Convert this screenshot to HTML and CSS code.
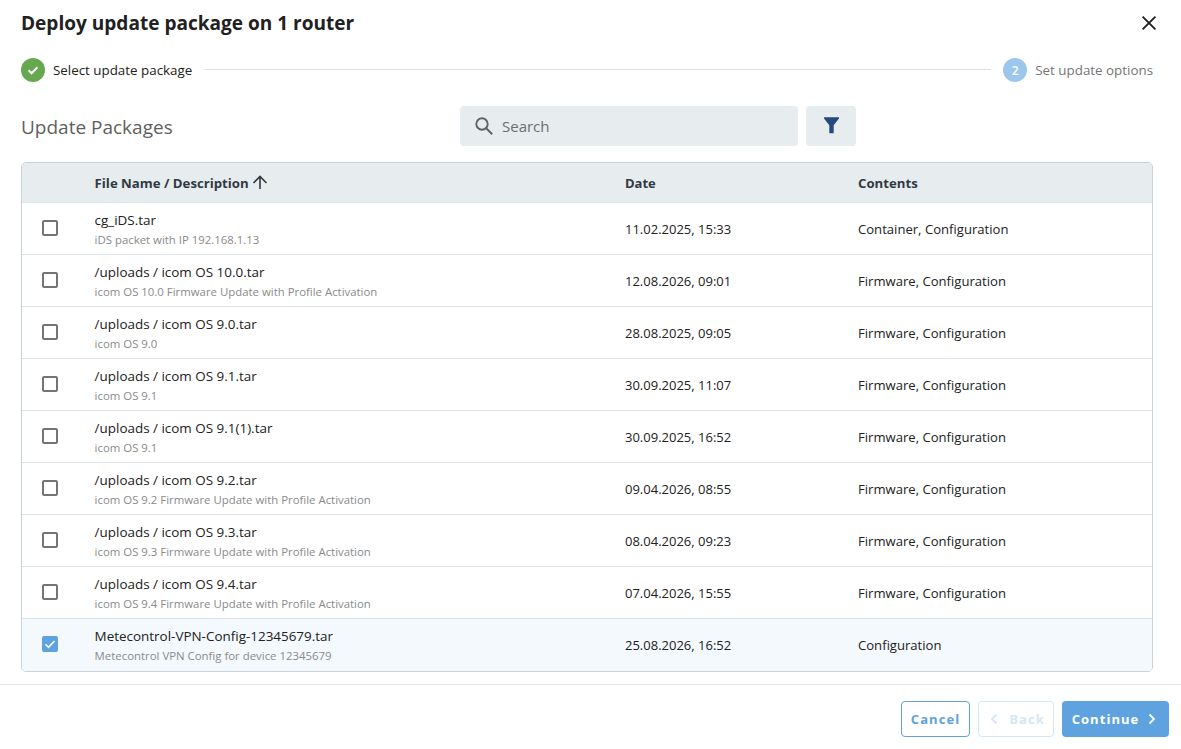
FILE: index.html
```html
<!DOCTYPE html>
<html>
<head>
  <title>Deploy update package</title>
  <meta charset="UTF-8">
  <link rel="stylesheet" href="styles.css">
</head>
<body>
  <div class="dialog">
    <div class="dialog-head">
      <h1>Deploy update package on 1 router</h1>
      <svg class="close" width="24" height="24" viewBox="0 0 24 24"><path d="M5.600 5.600l12.800 12.800M18.400 5.600L5.600 18.400" fill="none" stroke="#212121" stroke-width="1.900"/></svg>
    </div>

    <div class="stepper">
      <span class="step-dot done">
        <svg width="14" height="14" viewBox="0 0 14 14"><path d="M2.600 7.300l3 3 5.800-6" fill="none" stroke="#fff" stroke-width="2"/></svg>
      </span>
      <span class="step-label">Select update package</span>
      <span class="step-line"></span>
      <span class="step-dot todo">2</span>
      <span class="step-label muted">Set update options</span>
    </div>

    <div class="toolbar">
      <h2>Update Packages</h2>
      <div class="search">
        <svg width="24" height="24" viewBox="0 0 24 24"><circle cx="10" cy="10" r="5.700" fill="none" stroke="#5f6368" stroke-width="1.900"/><path d="M14.200 14.200l6 6" stroke="#5f6368" stroke-width="2"/></svg>
        <span>Search</span>
      </div>
      <div class="filter-btn">
        <svg width="24" height="24" viewBox="0 0 24 24"><path d="M5 3.200h15v1.400l-5.300 6.600v8h-4.400v-8L5 4.600z" fill="#264a80"/></svg>
      </div>
    </div>

    <div class="table">
      <div class="row head">
        <div></div>
        <div class="sort">File Name / Description
          <svg width="18" height="18" viewBox="0 0 18 18"><path d="M9 15V2.500M2.500 9L9 2.500 15.500 9" fill="none" stroke="#303a42" stroke-width="1.600"/></svg>
        </div>
        <div class="date">Date</div>
        <div>Contents</div>
      </div>

      <div class="row">
        <div class="check"><span class="box"></span></div>
        <div><div class="name">cg_iDS.tar</div><div class="desc">iDS packet with IP 192.168.1.13</div></div>
        <div class="date">11.02.2025, 15:33</div>
        <div>Container, Configuration</div>
      </div>
      <div class="row">
        <div class="check"><span class="box"></span></div>
        <div><div class="name">/uploads / icom OS 10.0.tar</div><div class="desc">icom OS 10.0 Firmware Update with Profile Activation</div></div>
        <div class="date">12.08.2026, 09:01</div>
        <div>Firmware, Configuration</div>
      </div>
      <div class="row">
        <div class="check"><span class="box"></span></div>
        <div><div class="name">/uploads / icom OS 9.0.tar</div><div class="desc">icom OS 9.0</div></div>
        <div class="date">28.08.2025, 09:05</div>
        <div>Firmware, Configuration</div>
      </div>
      <div class="row">
        <div class="check"><span class="box"></span></div>
        <div><div class="name">/uploads / icom OS 9.1.tar</div><div class="desc">icom OS 9.1</div></div>
        <div class="date">30.09.2025, 11:07</div>
        <div>Firmware, Configuration</div>
      </div>
      <div class="row">
        <div class="check"><span class="box"></span></div>
        <div><div class="name">/uploads / icom OS 9.1(1).tar</div><div class="desc">icom OS 9.1</div></div>
        <div class="date">30.09.2025, 16:52</div>
        <div>Firmware, Configuration</div>
      </div>
      <div class="row">
        <div class="check"><span class="box"></span></div>
        <div><div class="name">/uploads / icom OS 9.2.tar</div><div class="desc">icom OS 9.2 Firmware Update with Profile Activation</div></div>
        <div class="date">09.04.2026, 08:55</div>
        <div>Firmware, Configuration</div>
      </div>
      <div class="row">
        <div class="check"><span class="box"></span></div>
        <div><div class="name">/uploads / icom OS 9.3.tar</div><div class="desc">icom OS 9.3 Firmware Update with Profile Activation</div></div>
        <div class="date">08.04.2026, 09:23</div>
        <div>Firmware, Configuration</div>
      </div>
      <div class="row">
        <div class="check"><span class="box"></span></div>
        <div><div class="name">/uploads / icom OS 9.4.tar</div><div class="desc">icom OS 9.4 Firmware Update with Profile Activation</div></div>
        <div class="date">07.04.2026, 15:55</div>
        <div>Firmware, Configuration</div>
      </div>
      <div class="row selected">
        <div class="check">
          <span class="box on">
            <svg width="16" height="16" viewBox="0 0 16 16"><path d="M3.500 8.300l3 3 6-6.300" fill="none" stroke="#fff" stroke-width="1.600"/></svg>
          </span>
        </div>
        <div><div class="name">Metecontrol-VPN-Config-12345679.tar</div><div class="desc">Metecontrol VPN Config for device 12345679</div></div>
        <div class="date">25.08.2026, 16:52</div>
        <div>Configuration</div>
      </div>
    </div>

    <div class="dialog-foot">
      <div class="btn outline">Cancel</div>
      <div class="btn disabled">
        <svg width="14" height="14" viewBox="0 0 14 14"><path d="M9.500 2.500L5 7l4.500 4.500" fill="none" stroke="#d6e6f6" stroke-width="1.800"/></svg>
        Back
      </div>
      <div class="btn primary">
        Continue
        <svg width="14" height="14" viewBox="0 0 14 14"><path d="M4.500 2.500L9 7l-4.500 4.500" fill="none" stroke="#fff" stroke-width="1.800"/></svg>
      </div>
    </div>
  </div>
</body>
</html>
```

FILE: styles.css
```css
body {
  margin: 0;
  font-family: "Open Sans", sans-serif;
  font-size: 13.1px;
  color: #212121;
  background: #fff;
}
.dialog {
  width: 1181px;
  height: 749px;
  overflow: hidden;
}
.dialog-head {
  display: flex;
  justify-content: space-between;
  align-items: center;
  height: 24px;
  padding: 11px 20px 0 21px;
}
h1 {
  margin: 0;
  font-size: 19.06px;
  font-weight: 700;
  line-height: 24px;
}
.stepper {
  display: flex;
  align-items: center;
  height: 24px;
  margin-top: 23px;
  padding: 0 28px 0 21px;
}
.step-dot {
  display: flex;
  align-items: center;
  justify-content: center;
  width: 24px;
  height: 24px;
  border-radius: 50%;
  font-size: 12px;
  font-weight: 600;
  color: #fff;
}
.step-dot.done {
  background: #66a84f;
}
.step-dot.todo {
  background: #9cc7ec;
}
.step-label {
  margin-left: 8px;
  font-size: 13.36px;
}
.step-label.muted {
  color: #757575;
}
.step-line {
  flex: 1;
  height: 1px;
  margin: 0 12px 1px 13px;
  background: #e0e0e0;
}
.toolbar {
  display: flex;
  align-items: center;
  height: 40px;
  margin-top: 24px;
  padding-left: 21px;
}
h2 {
  width: 439px;
  margin: 2px 0 0;
  font-size: 19px;
  font-weight: 400;
  color: #5f5f5f;
}
.search {
  display: flex;
  align-items: center;
  gap: 6px;
  width: 326px;
  height: 40px;
  padding-left: 12px;
  border-radius: 4px;
  background: #e7ecef;
  font-size: 15px;
  color: #6b6f72;
}
.filter-btn {
  display: flex;
  align-items: center;
  justify-content: center;
  width: 50px;
  height: 40px;
  margin-left: 8px;
  border-radius: 4px;
  background: #e7ecef;
}
.table {
  width: 1130px;
  margin: 16px 0 0 21px;
  border: 1px solid #c8d2da;
  border-radius: 5px;
  overflow: hidden;
}
.row {
  display: grid;
  grid-template-columns: 72.600px 530.400px 233px 1fr;
  align-items: center;
  height: 51px;
  border-top: 1px solid #dde3e8;
}
.row.head {
  height: 39px;
  border-top: 0;
  border-bottom: 1px solid #c8d2da;
  margin-bottom: -1px;
  background: #e7ecef;
  font-size: 13.2px;
  font-weight: 700;
  color: #303a42;
}
.row.selected {
  background: #f4f9fe;
  height: 52px;
}
.sort {
  display: flex;
  align-items: center;
  gap: 2px;
}
.date {
  font-size: 13px;
}
.check {
  padding-left: 20px;
}
.box {
  display: block;
  box-sizing: border-box;
  width: 16px;
  height: 16px;
  margin-top: -1px;
  border: 2px solid #757575;
  border-radius: 2px;
}
.box.on {
  margin-top: -2px;
  border: 0;
  background: #5ea3e0;
}
.box svg {
  display: block;
}
.name {
  font-size: 13.45px;
  line-height: 18px;
}
.desc {
  margin: 3px 0 -1px;
  font-size: 11.4px;
  line-height: 16px;
  color: #8a8a8a;
}
.dialog-foot {
  display: flex;
  justify-content: flex-end;
  gap: 8px;
  height: 36px;
  margin-top: 12px;
  padding: 16px 12px 0 0;
  border-top: 1px solid #e4e4e4;
}
.btn {
  display: flex;
  align-items: center;
  justify-content: center;
  gap: 6px;
  box-sizing: border-box;
  height: 36px;
  border-radius: 4px;
  font-size: 13px;
  font-weight: 700;
  letter-spacing: 1.050px;
}
.btn.outline {
  width: 69px;
  border: 1px solid #5ea3e0;
  color: #5ea3e0;
}
.btn.disabled {
  width: 76px;
  gap: 8px;
  border: 1px solid #d6e6f6;
  color: #d6e6f6;
}
.btn.primary {
  width: 107px;
  background: #5ea3e0;
  color: #fff;
}
```
